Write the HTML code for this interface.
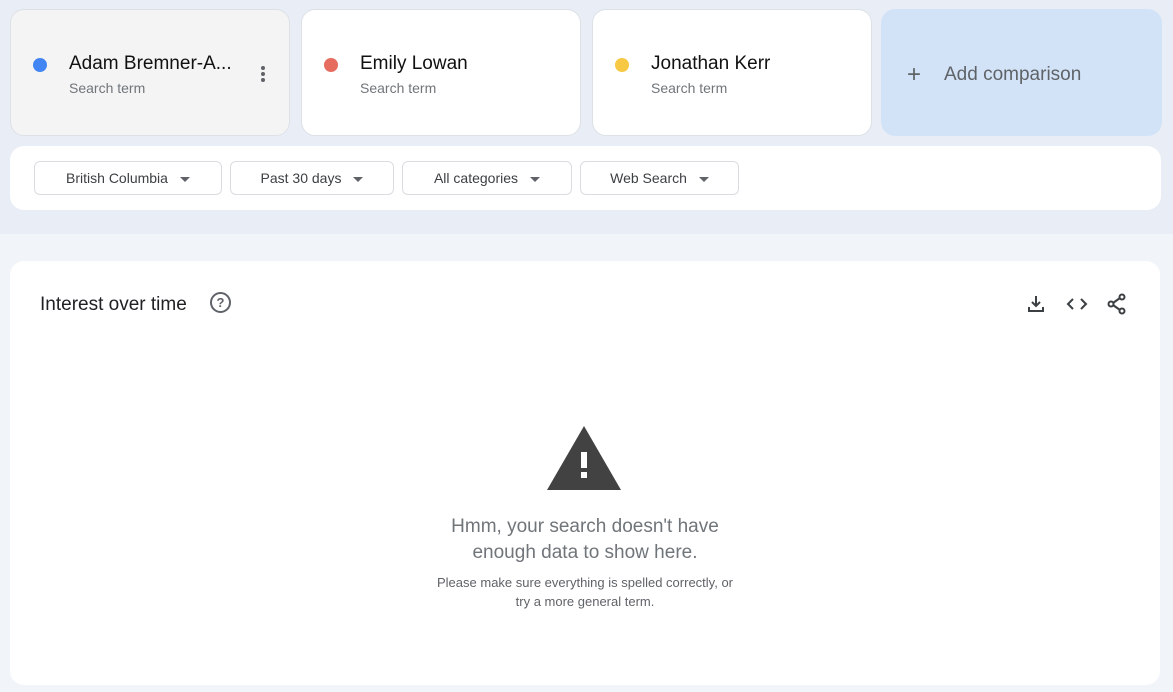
<!DOCTYPE html>
<html><head><style>
body{margin:0;width:1173px;height:692px;background:#f1f4f9;font-family:"Liberation Sans",sans-serif;position:relative;overflow:hidden}
.top{position:absolute;left:0;top:0;width:1173px;height:234px;background:#e9eef6}
.card{position:absolute;top:9px;height:127px;width:280px;border:1px solid #dde1e6;border-radius:14px;background:#fff;box-sizing:border-box}
.dot{position:absolute;left:22px;top:48px;width:14px;height:14px;border-radius:50%}
.name{position:absolute;left:58px;top:43px;font-size:19px;color:#111}
.sub{position:absolute;left:58px;top:70px;font-size:14px;color:#70757a}
.bar{position:absolute;left:10px;top:146px;width:1151px;height:64px;background:#fff;border-radius:14px}
.btn{position:absolute;top:15px;height:34px;border:1px solid #dadce0;border-radius:6px;box-sizing:border-box;font-size:14px;color:#3c4043;line-height:33px;text-align:center}
.btn:after{content:"";display:inline-block;margin-left:12px;border-left:5px solid transparent;border-right:5px solid transparent;border-top:5px solid #5f6368;vertical-align:middle}
.main{position:absolute;left:10px;top:261px;width:1150px;height:424px;background:#fff;border-radius:14px}
</style></head><body>
<div class="top"></div>
<div class="card" style="left:10px;background:#f4f4f4"><div class="dot" style="background:#4285f4"></div><div class="name">Adam Bremner-A...</div><div class="sub">Search term</div>
<div style="position:absolute;left:250px;top:56px;width:4px;height:18px"><div style="width:4px;height:4px;border-radius:50%;background:#5f6368;margin-bottom:2px"></div><div style="width:4px;height:4px;border-radius:50%;background:#5f6368;margin-bottom:2px"></div><div style="width:4px;height:4px;border-radius:50%;background:#5f6368"></div></div></div>
<div class="card" style="left:301px"><div class="dot" style="background:#e66c5f"></div><div class="name">Emily Lowan</div><div class="sub">Search term</div></div>
<div class="card" style="left:592px"><div class="dot" style="background:#f7c843"></div><div class="name">Jonathan Kerr</div><div class="sub">Search term</div></div>
<div class="card" style="left:881px;background:#d3e3f7;border:none;width:281px"><div style="position:absolute;left:26px;top:54px;font-size:24px;color:#5f6368;line-height:24px">+</div><div style="position:absolute;left:63px;top:55px;font-size:19px;color:#5f6368">Add comparison</div></div>
<div class="bar">
<div class="btn" style="left:24px;width:188px">British Columbia</div>
<div class="btn" style="left:220px;width:164px">Past 30 days</div>
<div class="btn" style="left:392px;width:170px">All categories</div>
<div class="btn" style="left:570px;width:159px;top:15px">Web Search</div>
</div>
<div class="main">
<div style="position:absolute;left:30px;top:33px;font-size:19px;color:#202124">Interest over time</div>
<div style="position:absolute;left:200px;top:31px;width:17px;height:17px;border:2px solid #5f6368;border-radius:50%;text-align:center;font-size:13px;font-weight:bold;line-height:17px;color:#5f6368">?</div>
<svg style="position:absolute;left:1016px;top:33px" width="20" height="20" viewBox="0 0 20 20"><path d="M10 2v10M6 8l4 4 4-4M3 13v4h14v-4" stroke="#3c4043" stroke-width="2" fill="none"/></svg>
<svg style="position:absolute;left:1056px;top:33px" width="22" height="20" viewBox="0 0 22 20"><path d="M7 5l-5 5 5 5M15 5l5 5-5 5" stroke="#3c4043" stroke-width="2" fill="none"/></svg>
<svg style="position:absolute;left:1096px;top:32px" width="22" height="22" viewBox="0 0 22 22"><circle cx="16" cy="4" r="2.5" stroke="#3c4043" stroke-width="2" fill="none"/><circle cx="5" cy="11" r="2.5" stroke="#3c4043" stroke-width="2" fill="none"/><circle cx="16" cy="18" r="2.5" stroke="#3c4043" stroke-width="2" fill="none"/><path d="M7 10l7-5M7 12l7 5" stroke="#3c4043" stroke-width="2"/></svg>
<svg style="position:absolute;left:537px;top:165px" width="74" height="65" viewBox="0 0 74 65"><path d="M37 0L74 64H0Z" fill="#424242"/><rect x="34" y="26" width="6" height="16" fill="#fff"/><rect x="34" y="46" width="6" height="6" fill="#fff"/></svg>
<div style="position:absolute;left:0;width:1150px;top:253px;text-align:center;font-size:19px;line-height:26px;color:#70757a">Hmm, your search doesn't have<br>enough data to show here.</div>
<div style="position:absolute;left:0;width:1150px;top:312px;text-align:center;font-size:13px;line-height:19px;color:#5f6368">Please make sure everything is spelled correctly, or<br>try a more general term.</div>
</div>
</body></html>
